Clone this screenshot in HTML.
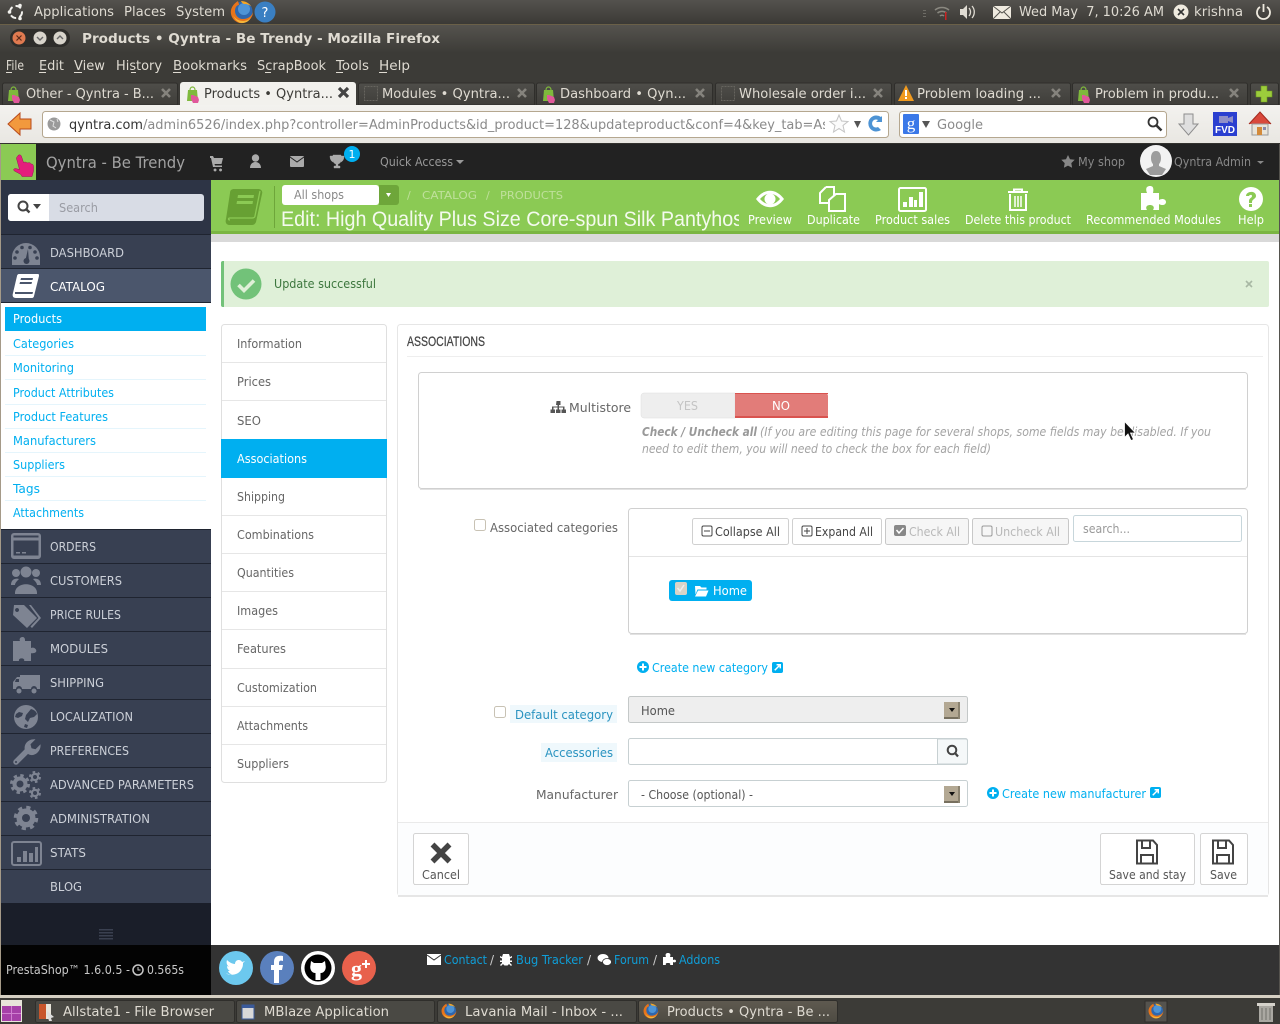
<!DOCTYPE html>
<html>
<head>
<meta charset="utf-8">
<title>Products • Qyntra - Be Trendy - Mozilla Firefox</title>
<style>
html,body{margin:0;padding:0;background:#fff;width:1280px;height:1024px;overflow:hidden}
svg{display:block}
text{white-space:pre}
.s{font-family:"DejaVu Sans",sans-serif;font-size:13px;fill:#dfdbd2}
.o{font-family:"DejaVu Sans",sans-serif;font-size:12px;fill:#666}
.side{fill:#ccd0d8}
.sub{fill:#00aff0}
.tb{fill:#fff}
.lnk{fill:#00aff0}
.ic{fill:#7e8492}
</style>
</head>
<body>
<svg width="1280" height="1024" viewBox="0 0 1280 1024" xmlns="http://www.w3.org/2000/svg">
<defs>
<linearGradient id="pan" x1="0" y1="0" x2="0" y2="1"><stop offset="0" stop-color="#54524e"/><stop offset="1" stop-color="#3b3a36"/></linearGradient>
<linearGradient id="ttl" x1="0" y1="0" x2="0" y2="1"><stop offset="0" stop-color="#55534e"/><stop offset="1" stop-color="#3c3b37"/></linearGradient>
<linearGradient id="tab" x1="0" y1="0" x2="0" y2="1"><stop offset="0" stop-color="#4f4e4a"/><stop offset="1" stop-color="#3f3e3a"/></linearGradient>
<linearGradient id="tbar" x1="0" y1="0" x2="0" y2="1"><stop offset="0" stop-color="#f3f2ef"/><stop offset="1" stop-color="#e9e7e2"/></linearGradient>
<linearGradient id="act" x1="0" y1="0" x2="0" y2="1"><stop offset="0" stop-color="#5f5a50"/><stop offset="1" stop-color="#4d4a42"/></linearGradient>
<symbol id="fav" viewBox="0 0 14 18" overflow="visible"><path d="M2 5h9l1 11H1z" fill="#7fb93c"/><path d="M4 5c0-4 5-4 5 0" fill="none" stroke="#7fb93c" stroke-width="1.200"/><path d="M5 10l2 0 5 2 1 3-1 3H7l-2-4z" fill="#e0589a"/></symbol>
<symbol id="x" viewBox="0 0 12 12"><path d="M2 2l8 8M10 2l-8 8" stroke="#85837d" stroke-width="2.600"/></symbol>
<symbol id="ff" viewBox="0 0 24 24"><circle cx="12.500" cy="11.500" r="10" fill="#2f67ad"/><circle cx="14" cy="9" r="6" fill="#4e94d6"/><path d="M8 1C3 4 0 9 1 14c1 6 7 10 12 9 6-1 10-6 10-11-1 4-5 7-10 7-5 0-8-4-8-8 0-4 2-6 4-6 0-2-1-3-1-4z" fill="#e8741a"/><path d="M11 1c4 0 8 2 10 5-2-1-4-2-6-2-2 0-3-1-4-3z" fill="#f5a623"/><path d="M3 15c2 4 6 6 10 6 3 0 6-1 8-4-2 5-6 6-9 6-4 0-7-3-9-8z" fill="#f4b63a"/></symbol>
<symbol id="floppy" viewBox="0 0 24 26"><path fill="none" stroke="#444" stroke-width="2" d="M2 1.500h16l4 4.500v18.500h-20z"/><path fill="none" stroke="#444" stroke-width="2" d="M7 2v7h8V2M6 24v-8h12v8"/></symbol>
<symbol id="plusc" viewBox="0 0 12 12"><circle cx="6" cy="6" r="6" fill="#00aff0"/><path d="M6 2.500v7M2.500 6h7" stroke="#fff" stroke-width="2"/></symbol>
<symbol id="ext" viewBox="0 0 12 12"><rect width="12" height="12" rx="2" fill="#00aff0"/><path d="M3 9l5-5M5 3h4v4" stroke="#fff" stroke-width="1.600" fill="none"/></symbol>
<symbol id="arrow" viewBox="0 0 16 17"><rect width="15" height="16" fill="#b3a893"/><rect y="15" width="15" height="2" fill="#77705f"/><rect x="14" width="2" height="17" fill="#8b8370"/><path d="M5 6h6l-3 4z" fill="#111"/></symbol>
</defs>

<!-- desktop panel -->
<rect width="1280" height="1024" fill="#fff"/>
<rect width="1280" height="24" fill="url(#pan)"/>
<rect y="24" width="1280" height="1" fill="#6a6048"/>
<g fill="none" stroke="#f2f1ed" stroke-width="2"><circle cx="16" cy="12" r="6" stroke-dasharray="6 3.200"/></g>
<g fill="#f2f1ed"><circle cx="9.500" cy="12" r="1.800"/><circle cx="20" cy="5.500" r="1.800"/><circle cx="20" cy="18.500" r="1.800"/></g>
<text class="s" x="34" y="16" font-size="14" textLength="80" lengthAdjust="spacingAndGlyphs">Applications</text>
<text class="s" x="124" y="16" textLength="42" lengthAdjust="spacingAndGlyphs">Places</text>
<text class="s" x="176" y="16" textLength="49" lengthAdjust="spacingAndGlyphs">System</text>
<use href="#ff" x="230" y="0" width="24" height="24"/>
<circle cx="265" cy="12" r="10.500" fill="#3a7fc2"/><text x="265" y="17" text-anchor="middle" font-family="DejaVu Sans,sans-serif" font-size="13" fill="#fff">?</text>
<g fill="none" stroke="#8a8880" stroke-width="1.500"><path d="M935 10a11 11 0 0 1 14 0M937.500 13a7 7 0 0 1 9 0M940 16a3 3 0 0 1 4 0"/></g>
<rect x="945" y="12" width="1.500" height="8" fill="#c22"/><g fill="#6e6c66"><rect x="923" y="10" width="3" height="1"/><rect x="923" y="13" width="3" height="1"/><rect x="923" y="16" width="3" height="1"/></g>
<path d="M960 9h3l4-4v14l-4-4h-3z" fill="#dfdbd2"/><path d="M969 8a6 6 0 0 1 0 8M972 6a9 9 0 0 1 0 12" fill="none" stroke="#dfdbd2" stroke-width="1.300"/>
<rect x="993" y="6" width="18" height="13" fill="#efeadf"/><path d="M993 6l9 7 9-7M993 19l7-7M1011 19l-7-7" fill="none" stroke="#55534e"/>
<text class="s" x="1019" y="16" textLength="145" lengthAdjust="spacingAndGlyphs">Wed May  7, 10:26 AM</text>
<circle cx="1181" cy="12" r="7.500" fill="#efeadf"/><path d="M1178 9l6 6M1184 9l-6 6" stroke="#333" stroke-width="1.600"/>
<text class="s" x="1194" y="16" textLength="49" lengthAdjust="spacingAndGlyphs">krishna</text>
<path d="M1260 7a6.500 6.500 0 1 0 7 0M1263.500 4v8" fill="none" stroke="#efeadf" stroke-width="1.800"/>

<!-- window title -->
<rect y="25" width="1280" height="28" fill="url(#ttl)"/>
<rect y="52" width="1280" height="54" fill="#3c3b37"/>
<rect x="10" y="29" width="60" height="18" rx="9" fill="#2e2d2a"/>
<circle cx="19" cy="38" r="6.500" fill="#e07a50"/><path d="M16.500 35.500l5 5M21.500 35.500l-5 5" stroke="#5a2a1a" stroke-width="1.200"/>
<circle cx="40" cy="38" r="6.500" fill="#d8d4cb"/><path d="M37 37l3 3 3-3" fill="none" stroke="#666" stroke-width="1.400"/>
<circle cx="60" cy="38" r="6.500" fill="#d8d4cb"/><path d="M57 39l3-3 3 3" fill="none" stroke="#666" stroke-width="1.400"/>
<text x="82" y="43" font-family="DejaVu Sans,sans-serif" font-weight="bold" font-size="13" fill="#dfdbd2" textLength="358" lengthAdjust="spacingAndGlyphs">Products • Qyntra - Be Trendy - Mozilla Firefox</text>

<!-- menu -->
<g class="m">
<text class="s" x="6" y="70" textLength="18" lengthAdjust="spacingAndGlyphs">File</text>
<text class="s" x="39" y="70" textLength="25" lengthAdjust="spacingAndGlyphs">Edit</text>
<text class="s" x="74" y="70" textLength="31" lengthAdjust="spacingAndGlyphs">View</text>
<text class="s" x="116" y="70" textLength="46" lengthAdjust="spacingAndGlyphs">History</text>
<text class="s" x="173" y="70" textLength="74" lengthAdjust="spacingAndGlyphs">Bookmarks</text>
<text class="s" x="257" y="70" textLength="69" lengthAdjust="spacingAndGlyphs">ScrapBook</text>
<text class="s" x="336" y="70" textLength="33" lengthAdjust="spacingAndGlyphs">Tools</text>
<text class="s" x="379" y="70" textLength="31" lengthAdjust="spacingAndGlyphs">Help</text>
</g>
<g fill="#dfdbd2"><rect x="6" y="72" width="6" height="1"/><rect x="39" y="72" width="7" height="1"/><rect x="74" y="72" width="8" height="1"/><rect x="131" y="72" width="5" height="1"/><rect x="173" y="72" width="8" height="1"/><rect x="265" y="72" width="6" height="1"/><rect x="336" y="72" width="7" height="1"/><rect x="379" y="72" width="8" height="1"/></g>

<!-- tabs -->
<g fill="url(#tab)" stroke="#2f2e2b">
<path d="M2.500 105V85a2 2 0 0 1 2-2h171a2 2 0 0 1 2 2v20z"/>
<path d="M358.500 105V85a2 2 0 0 1 2-2h172a2 2 0 0 1 2 2v20z"/>
<path d="M536.500 105V85a2 2 0 0 1 2-2h172a2 2 0 0 1 2 2v20z"/>
<path d="M715.500 105V85a2 2 0 0 1 2-2h172a2 2 0 0 1 2 2v20z"/>
<path d="M894.500 105V85a2 2 0 0 1 2-2h172a2 2 0 0 1 2 2v20z"/>
<path d="M1072.500 105V85a2 2 0 0 1 2-2h171a2 2 0 0 1 2 2v20z"/>
<path d="M1250.500 105V85a2 2 0 0 1 2-2h24a2 2 0 0 1 2 2v20z"/>
</g>
<path d="M180 106V85a3 3 0 0 1 3-3h170a3 3 0 0 1 3 3v21z" fill="#f2f1ed"/>
<use href="#fav" x="7" y="85" width="14" height="18"/>
<use href="#fav" x="186" y="85" width="14" height="18"/>
<use href="#fav" x="542" y="85" width="14" height="18"/>
<use href="#fav" x="1077" y="85" width="14" height="18"/>
<rect x="364.500" y="86.500" width="13" height="14" fill="none" stroke="#66645e" stroke-dasharray="2 1"/>
<rect x="721.500" y="86.500" width="13" height="14" fill="none" stroke="#66645e" stroke-dasharray="2 1"/>
<path d="M906 85l8 16h-16z" fill="#f09a1f"/><rect x="905" y="90" width="2" height="6" fill="#fff"/><rect x="905" y="97" width="2" height="2" fill="#fff"/>
<text class="s" x="26" y="98" textLength="128" lengthAdjust="spacingAndGlyphs">Other - Qyntra - B...</text>
<text class="s" x="204" y="98" style="fill:#3c3b37" textLength="129" lengthAdjust="spacingAndGlyphs">Products • Qyntra...</text>
<text class="s" x="382" y="98" textLength="128" lengthAdjust="spacingAndGlyphs">Modules • Qyntra...</text>
<text class="s" x="560" y="98" textLength="126" lengthAdjust="spacingAndGlyphs">Dashboard • Qyn...</text>
<text class="s" x="739" y="98" textLength="127" lengthAdjust="spacingAndGlyphs">Wholesale order i...</text>
<text class="s" x="917" y="98" textLength="124" lengthAdjust="spacingAndGlyphs">Problem loading ...</text>
<text class="s" x="1095" y="98" textLength="124" lengthAdjust="spacingAndGlyphs">Problem in produ...</text>
<use href="#x" x="160" y="87" width="12" height="12"/>
<path d="M339 88l9 9M348 88l-9 9" stroke="#444" stroke-width="3.200"/>
<use href="#x" x="516" y="87" width="12" height="12"/>
<use href="#x" x="694" y="87" width="12" height="12"/>
<use href="#x" x="872" y="87" width="12" height="12"/>
<use href="#x" x="1050" y="87" width="12" height="12"/>
<use href="#x" x="1228" y="87" width="12" height="12"/>
<path d="M1261 86h6v5h5v6h-5v5h-6v-5h-5v-6h5z" fill="#9ccc3c" stroke="#6c9a1c" stroke-width=".6"/>

<!-- nav toolbar -->
<rect y="105" width="1280" height="38" fill="url(#tbar)"/>
<rect y="143" width="1280" height="1" fill="#33322e"/>
<path d="M8 124l12-11v6h11v10H20v6z" fill="#f2993d" stroke="#b84a1c"/>
<rect x="42.500" y="111.500" width="846" height="26" rx="3" fill="#fff" stroke="#b5a78f"/>
<circle cx="54" cy="124" r="6.500" fill="#9a9a9a"/><path d="M50 120l4 2-1 4 3 2M57 119l1 3" stroke="#e0e0e0" fill="none"/>
<text x="69" y="129" font-family="DejaVu Sans,sans-serif" font-size="13" fill="#333" textLength="74" lengthAdjust="spacingAndGlyphs">qyntra.com</text>
<svg x="143" y="112" width="682" height="24"><text x="0" y="17" font-family="DejaVu Sans,sans-serif" font-size="13" fill="#8a8a8a" textLength="686" lengthAdjust="spacingAndGlyphs">/admin6526/index.php?controller=AdminProducts&amp;id_product=128&amp;updateproduct&amp;conf=4&amp;key_tab=As</text></svg>
<path d="M839 115l2.500 6 6.500.5-5 4 1.500 6.500-5.500-3.500-5.500 3.500 1.500-6.500-5-4 6.500-.5z" fill="#fbfbfb" stroke="#c4c4c4"/>
<path d="M854 121h7l-3.500 7z" fill="#555"/>
<path d="M881 117a8 8 0 1 0 0 13l-3-3a4 4 0 1 1 0-7l-2 2h6v-6z" fill="#4d93d4"/>
<rect x="899.500" y="111.500" width="267" height="26" rx="3" fill="#fff" stroke="#b5a78f"/>
<rect x="903" y="114" width="16" height="20" rx="1" fill="#3a78e8"/><text x="911" y="129" text-anchor="middle" font-family="Liberation Serif,serif" font-size="17" fill="#fff">g</text>
<path d="M922 121h8l-4 7z" fill="#555"/>
<text x="937" y="129" font-family="DejaVu Sans,sans-serif" font-size="13" fill="#8a8a8a" textLength="46" lengthAdjust="spacingAndGlyphs">Google</text>
<circle cx="1153" cy="122" r="4.500" fill="#fff" stroke="#333" stroke-width="1.800"/><path d="M1156.500 125.500l5 5" stroke="#333" stroke-width="2.500"/>
<path d="M1184 114h9v10h5l-9.500 11-9.500-11h5z" fill="#dfdfdf" stroke="#8d8d8d"/>
<rect x="1213" y="112" width="24" height="24" fill="#2a3fd0"/><rect x="1219" y="116" width="9" height="7" fill="#8f8fc8"/><path d="M1228 118l5-2v7l-5-2z" fill="#8f8fc8"/><text x="1225" y="133" text-anchor="middle" font-family="Liberation Sans,sans-serif" font-weight="bold" font-size="10" fill="#fff">FVD</text>
<path d="M1249 124l11-12 11 12" fill="#d9483b" stroke="#a22b20"/><path d="M1252 124h16v11h-16z" fill="#e8e4da" stroke="#999"/><rect x="1257" y="127" width="5" height="8" fill="#d38a3a"/><rect x="1263" y="127" width="3" height="3" fill="#88a"/>

<!-- presta header -->
<rect x="0" y="144" width="1280" height="36" fill="#222"/>
<rect x="1" y="144" width="35" height="36" fill="#8bca54"/>
<path d="M18 155.500c1-1 3-1 3.500 1l2 6c2-1 3 0 4 .5 2-1 3 0 3.500 1 2 0 2.500 1 2.500 3v4l-1.500 5.500H22l-1-2-6.500-3.500c-1.500-1-1-2.500 1-2.500l4 1-3-11c0-1 .5-2 1.500-2.500z" fill="#e41e7c" stroke="#9b0f55" stroke-width=".5"/>
<text x="46" y="168" font-family="DejaVu Sans,sans-serif" font-size="16" fill="#a2a2a2" textLength="139" lengthAdjust="spacingAndGlyphs">Qyntra - Be Trendy</text>
<path d="M210 156h3l1 2h9l-1.500 6h-7l.5 1.500h7v1.500h-9l-2-9h-1zM215 168.500a1.500 1.500 0 1 0 .1 0zM220.500 168.500a1.500 1.500 0 1 0 .1 0z" fill="#aaa"/>
<g fill="#aaa"><circle cx="255.500" cy="158" r="3.700"/><path d="M250 168c0-8 11-8 11 0z"/></g>
<rect x="290" y="156" width="14" height="11" rx="1" fill="#aaa"/><path d="M290 157l7 5 7-5" fill="none" stroke="#222"/>
<path d="M333 155h8v5a4 4 0 0 1-3 4v2h2v2h-6v-2h2v-2a4 4 0 0 1-3-4zM333 156h-3c0 3 1 5 3 6M341 156h3c0 3-1 5-3 6" fill="#aaa" stroke="#aaa" stroke-width=".4"/>
<circle cx="352" cy="154" r="8" fill="#00aff0"/><text x="352" y="158" text-anchor="middle" font-family="DejaVu Sans,sans-serif" font-size="11" fill="#fff">1</text>
<text class="o" x="380" y="166" style="fill:#999" textLength="73" lengthAdjust="spacingAndGlyphs">Quick Access</text><path d="M456 160h8l-4 4z" fill="#999"/>
<path d="M1068 155l2 4.200 4.700.6-3.400 3.300.8 4.700-4.100-2.200-4.100 2.200.8-4.700-3.400-3.300 4.700-.6z" fill="#888"/>
<text class="o" x="1078" y="166" style="fill:#888" textLength="47" lengthAdjust="spacingAndGlyphs">My shop</text>
<circle cx="1156" cy="161" r="16" fill="#f2f2f2"/>
<path d="M1156 151c-4 0-5 4-5 7 0 3 1 5 2 6v2l-7 3 4 6h12l4-6-7-3v-2c1-1 2-3 2-6 0-3-1-7-5-7z" fill="#9c9c9c"/>
<text class="o" x="1174" y="166" style="fill:#888" textLength="77" lengthAdjust="spacingAndGlyphs">Qyntra Admin</text><path d="M1257 161h7l-3.500 3z" fill="#888"/>

<!-- sidebar -->
<rect x="0" y="144" width="1" height="855" fill="#a59a88"/>
<rect x="1" y="180" width="210" height="723" fill="#384052"/>
<rect x="1" y="180" width="210" height="55" fill="#2d3445"/>
<rect x="1" y="234" width="210" height="1" fill="#1f2430"/>
<rect x="8" y="194" width="196" height="27" rx="3" fill="#d8dce5"/>
<path d="M11 194h38v27H11a3 3 0 0 1-3-3v-21a3 3 0 0 1 3-3z" fill="#fff"/>
<circle cx="23" cy="206" r="4.500" fill="none" stroke="#444" stroke-width="2"/><path d="M26 209l3.500 3.500" stroke="#444" stroke-width="2.400"/>
<path d="M33 204h8l-4 5z" fill="#444"/>
<text class="o" x="59" y="212" style="fill:#9a9ca4" textLength="39" lengthAdjust="spacingAndGlyphs">Search</text>

<rect x="1" y="235" width="210" height="34" fill="#384052"/>
<rect x="1" y="269" width="210" height="34" fill="#4b566c"/>
<g fill="#1f2430"><rect x="1" y="268" width="210" height="1"/><rect x="1" y="302" width="210" height="1"/><rect x="1" y="529" width="210" height="1"/><rect x="1" y="563" width="210" height="1"/><rect x="1" y="597" width="210" height="1"/><rect x="1" y="631" width="210" height="1"/><rect x="1" y="665" width="210" height="1"/><rect x="1" y="699" width="210" height="1"/><rect x="1" y="733" width="210" height="1"/><rect x="1" y="767" width="210" height="1"/><rect x="1" y="801" width="210" height="1"/><rect x="1" y="835" width="210" height="1"/><rect x="1" y="869" width="210" height="1"/></g>
<rect x="1" y="303" width="210" height="226" fill="#fff"/>
<rect x="5" y="307" width="201" height="24" fill="#00aff0"/>
<g fill="#e5f5fc"><rect x="5" y="355" width="201" height="1"/><rect x="5" y="379" width="201" height="1"/><rect x="5" y="404" width="201" height="1"/><rect x="5" y="428" width="201" height="1"/><rect x="5" y="452" width="201" height="1"/><rect x="5" y="476" width="201" height="1"/><rect x="5" y="500" width="201" height="1"/></g>
<rect x="1" y="903" width="210" height="42" fill="#1a1e29"/>
<g fill="#3a4050"><rect x="99" y="929" width="14" height="1.500"/><rect x="99" y="932" width="14" height="1.500"/><rect x="99" y="935" width="14" height="1.500"/><rect x="99" y="938" width="14" height="1.500"/></g>

<g class="o" font-size="12">
<text class="o side" x="50" y="257" textLength="74" lengthAdjust="spacingAndGlyphs">DASHBOARD</text>
<text class="o" x="50" y="291" style="fill:#fff" textLength="55" lengthAdjust="spacingAndGlyphs">CATALOG</text>
<text class="o side" x="50" y="551" textLength="46" lengthAdjust="spacingAndGlyphs">ORDERS</text>
<text class="o side" x="50" y="585" textLength="72" lengthAdjust="spacingAndGlyphs">CUSTOMERS</text>
<text class="o side" x="50" y="619" textLength="71" lengthAdjust="spacingAndGlyphs">PRICE RULES</text>
<text class="o side" x="50" y="653" textLength="58" lengthAdjust="spacingAndGlyphs">MODULES</text>
<text class="o side" x="50" y="687" textLength="54" lengthAdjust="spacingAndGlyphs">SHIPPING</text>
<text class="o side" x="50" y="721" textLength="83" lengthAdjust="spacingAndGlyphs">LOCALIZATION</text>
<text class="o side" x="50" y="755" textLength="79" lengthAdjust="spacingAndGlyphs">PREFERENCES</text>
<text class="o side" x="50" y="789" textLength="144" lengthAdjust="spacingAndGlyphs">ADVANCED PARAMETERS</text>
<text class="o side" x="50" y="823" textLength="100" lengthAdjust="spacingAndGlyphs">ADMINISTRATION</text>
<text class="o side" x="50" y="857" textLength="36" lengthAdjust="spacingAndGlyphs">STATS</text>
<text class="o side" x="50" y="891" textLength="32" lengthAdjust="spacingAndGlyphs">BLOG</text>
<text class="o" x="13" y="323" style="fill:#fff" textLength="49" lengthAdjust="spacingAndGlyphs">Products</text>
<text class="o sub" x="13" y="348" textLength="61" lengthAdjust="spacingAndGlyphs">Categories</text>
<text class="o sub" x="13" y="372" textLength="61" lengthAdjust="spacingAndGlyphs">Monitoring</text>
<text class="o sub" x="13" y="397" textLength="101" lengthAdjust="spacingAndGlyphs">Product Attributes</text>
<text class="o sub" x="13" y="421" textLength="95" lengthAdjust="spacingAndGlyphs">Product Features</text>
<text class="o sub" x="13" y="445" textLength="83" lengthAdjust="spacingAndGlyphs">Manufacturers</text>
<text class="o sub" x="13" y="469" textLength="52" lengthAdjust="spacingAndGlyphs">Suppliers</text>
<text class="o sub" x="13" y="493" textLength="27" lengthAdjust="spacingAndGlyphs">Tags</text>
<text class="o sub" x="13" y="517" textLength="71" lengthAdjust="spacingAndGlyphs">Attachments</text>
</g>

<!-- sidebar icons -->
<g class="ic">
<path d="M12 265v-8a14 14 0 0 1 28 0v8z"/>
<path d="M11 536a3 3 0 0 1 3-3h24a3 3 0 0 1 3 3v20a3 3 0 0 1-3 3H14a3 3 0 0 1-3-3zm2.500 4.500v15h25v-15zm0-5v2h25v-2zM16 552h4v1.500h-4zm6 0h4v1.500h-4z" fill-rule="evenodd"/>
<circle cx="26" cy="572" r="5.500"/><circle cx="16" cy="573" r="4"/><circle cx="36" cy="573" r="4"/><path d="M15 594c-1-13 23-13 22 0z"/><path d="M11 585c0-6 5-7 8-6-2 2-4 4-4 6zM41 585c0-6-5-7-8-6 2 2 4 4 4 6z"/>
<path d="M14 605h10l13 13-10 10-14-13zM17 608a2 2 0 1 0 .1 0z" fill-rule="evenodd"/><path d="M29 605l2 0 10 13-9 10-1.500-1.500 8-8.500z"/>
<path d="M13 641h7c-2-4 5-6 5-1 0 2 0 1 0 1h6v7c4-2 8 4 3 5s-3-1-3 0v8h-7c2-3-6-4-5 0h-6z"/>
<path d="M20 675h20v14h-3a3 3 0 0 0-6 0H22a3 3 0 0 0-6 0h-3v-7l4-5h3zm-4 4l-1 3h4v-3z" fill-rule="evenodd"/><circle cx="19" cy="691" r="2.500"/><circle cx="34" cy="691" r="2.500"/>
<circle cx="26" cy="717" r="12"/>
</g>
<path d="M31 709c3 1 5 2 6 5l-3 3-4 1-2 4-3-3 1-4zM19 712l4 1-1 3-4 2-3-1 1-3zM25 724l3 1-1 3-3-1z" fill="#384052"/>
<!-- wrench -->
<path d="M16 762l12-12" stroke="#7e8492" stroke-width="5.500" stroke-linecap="round"/>
<path d="M25.500 751.500c-3-6 2-13 10-12.200l-5 5 1 4 4 1 5-5c.8 7-6 13-12 10z" fill="#7e8492"/>
<circle cx="16" cy="762" r="1" fill="#384052"/>
<!-- gauge details -->
<g fill="#384052"><circle cx="17" cy="252" r="1.800"/><circle cx="22" cy="247.500" r="1.800"/><circle cx="30" cy="247.500" r="1.800"/><circle cx="35" cy="252" r="1.800"/><circle cx="15" cy="258" r="1.800"/><circle cx="37" cy="258" r="1.800"/></g>
<path d="M25 262l3-13 1 13z" fill="#384052"/><circle cx="26.500" cy="261" r="3" fill="#384052"/>
<path d="M19 274h19c1 0 1 1 1 2l-5 20c0 1-1 2-2 2H16c-3 0-4-2-3-5l4-17c0-1 1-2 2-2z" fill="#fff"/>
<path d="M21 278h12l-.5 2H20.500zM20 282h12l-.5 2H19.500zM15 292h18l-.5 2H15z" fill="#4b566c"/>
<!-- gears -->
<g fill="none" stroke="#7e8492">
<circle cx="20" cy="784" r="8.500" stroke-width="3" stroke-dasharray="3.340 3.340"/>
<circle cx="35" cy="777" r="5" stroke-width="2" stroke-dasharray="2.620 2.620"/>
<circle cx="35" cy="793" r="5" stroke-width="2" stroke-dasharray="2.620 2.620"/>
<circle cx="26" cy="818" r="10.500" stroke-width="3.500" stroke-dasharray="4.120 4.120"/>
</g>
<g fill="#7e8492"><circle cx="20" cy="784" r="7.500"/><circle cx="35" cy="777" r="4.200"/><circle cx="35" cy="793" r="4.200"/><circle cx="26" cy="818" r="9.500"/></g>
<g fill="#384052"><circle cx="20" cy="784" r="3.500"/><circle cx="35" cy="777" r="2"/><circle cx="35" cy="793" r="2"/><circle cx="26" cy="818" r="4"/></g>
<rect x="12" y="842" width="29" height="23" rx="2" fill="none" stroke="#7e8492" stroke-width="2"/>
<g class="ic"><rect x="17" y="857" width="4" height="5"/><rect x="23" y="851" width="4" height="11"/><rect x="29" y="853" width="4" height="9"/><rect x="35" y="847" width="3" height="15"/></g>

<!-- green header -->
<rect x="211" y="180" width="1069" height="51" fill="#8bca54"/>
<rect x="211" y="231" width="1069" height="3" fill="#7ab542"/>
<rect x="211" y="234" width="1069" height="8" fill="#d9d9d9"/>
<path d="M234 189h24c3 0 5 2 4 5l-6 28c-1 2-2 3-4 3h-22c-4 0-5-3-4-6l4-26c0-3 2-4 4-4z" fill="#67a033"/>
<path d="M230 220c-2 0-2-2 0-2h22c2 0 3-1 3-2l5-25" fill="none" stroke="#8bca54" stroke-width="1.300"/>
<path d="M238 195h16l-.5 3h-16zM237 201h16l-.5 3h-16z" fill="#8bca54"/>
<rect x="274" y="186" width="1" height="42" fill="#6ea63a"/>
<rect x="282" y="185" width="97" height="20" rx="3" fill="#fff"/>
<path d="M379 185h17a3 3 0 0 1 3 3v14a3 3 0 0 1-3 3h-17z" fill="#6ea63a"/><path d="M386 193h5l-2.500 4z" fill="#fff"/>
<text class="o" x="294" y="199" style="fill:#888" textLength="50" lengthAdjust="spacingAndGlyphs">All shops</text>
<g fill="#bfe09b" font-family="DejaVu Sans,sans-serif" font-size="11">
<text x="407" y="199">/</text>
<text x="422" y="199" textLength="55" lengthAdjust="spacingAndGlyphs">CATALOG</text>
<text x="486" y="199">/</text>
<text x="500" y="199" textLength="63" lengthAdjust="spacingAndGlyphs">PRODUCTS</text>
</g>
<svg x="281" y="205" width="458" height="30"><text x="0" y="21" font-family="Liberation Sans,sans-serif" font-size="21" fill="#f4faee" textLength="462" lengthAdjust="spacingAndGlyphs">Edit: High Quality Plus Size Core-spun Silk Pantyhos</text></svg>
<g>
<text class="o tb" x="748" y="224" textLength="44" lengthAdjust="spacingAndGlyphs">Preview</text>
<text class="o tb" x="807" y="224" textLength="53" lengthAdjust="spacingAndGlyphs">Duplicate</text>
<text class="o tb" x="875" y="224" textLength="75" lengthAdjust="spacingAndGlyphs">Product sales</text>
<text class="o tb" x="965" y="224" textLength="106" lengthAdjust="spacingAndGlyphs">Delete this product</text>
<text class="o tb" x="1086" y="224" textLength="135" lengthAdjust="spacingAndGlyphs">Recommended Modules</text>
<text class="o tb" x="1238" y="224" textLength="26" lengthAdjust="spacingAndGlyphs">Help</text>
</g>
<!-- toolbar icons -->
<path d="M756 199c8-11 20-11 28 0-8 11-20 11-28 0z" fill="#fff"/><path d="M760 199c6-7 14-7 20 0-6 7-14 7-20 0z" fill="#8bca54"/><circle cx="770" cy="199" r="5.500" fill="#fff"/>
<g fill="none" stroke="#fff" stroke-width="2"><path d="M826 187h8v9M826 187l-6 6v10h9"/><path d="M836 194h9v17h-16v-11z"/></g>
<rect x="899" y="188" width="27" height="23" rx="1.500" fill="none" stroke="#fff" stroke-width="2"/>
<g fill="#fff"><rect x="903" y="202" width="4" height="5"/><rect x="909" y="197" width="4" height="10"/><rect x="914" y="200" width="3" height="7"/><rect x="919" y="192" width="4" height="15"/></g>
<g fill="none" stroke="#fff" stroke-width="2"><path d="M1008 192h20M1014 192v-2.500h8v2.500"/><path d="M1010 194v16h16v-16"/><path d="M1015 196v11M1018 196v11M1021 196v11" stroke-width="1.500"/></g>
<path d="M1141 193h6c-2-5 0-7 3-7s4 2 3 7h6v7c3-2 7-1 7 2s-4 4-7 2v6h-6c2-3 0-5-3-5s-5 2-3 5h-6z" fill="#fff"/>
<circle cx="1251" cy="199" r="12" fill="#fff"/><path d="M1246 196c0-5 10-6 10 0 0 3-4 3-4 6v1h-3v-2c0-3 3-3 3-5 0-2-3-1-3 0z" fill="#8bca54"/><rect x="1249" y="204" width="3" height="3" fill="#8bca54"/>

<!-- alert -->
<rect x="221" y="261" width="1048" height="46" rx="2" fill="#dff0d8"/>
<path d="M224 261v46h-1a2 2 0 0 1-2-2v-42a2 2 0 0 1 2-2z" fill="#72c279"/>
<circle cx="246" cy="284" r="15.500" fill="#72c279"/>
<path d="M238.500 285l5.500 5.500 10-10" fill="none" stroke="#dff0d8" stroke-width="3.600"/>
<text class="o" x="274" y="288" style="fill:#3c763d" textLength="102" lengthAdjust="spacingAndGlyphs">Update successful</text>
<path d="M1246 281l6 6M1252 281l-6 6" stroke="#a8b8a4" stroke-width="1.600"/>

<!-- left tabs -->
<rect x="221.500" y="324.500" width="165" height="458" rx="3" fill="#fff" stroke="#dfdfdf"/>
<g fill="#e6e6e6"><rect x="222" y="362" width="164" height="1"/><rect x="222" y="400" width="164" height="1"/><rect x="222" y="515" width="164" height="1"/><rect x="222" y="553" width="164" height="1"/><rect x="222" y="591" width="164" height="1"/><rect x="222" y="629" width="164" height="1"/><rect x="222" y="668" width="164" height="1"/><rect x="222" y="706" width="164" height="1"/><rect x="222" y="744" width="164" height="1"/></g>
<rect x="221" y="439" width="166" height="39" fill="#00aff0"/>
<text class="o" x="237" y="348" textLength="65" lengthAdjust="spacingAndGlyphs">Information</text>
<text class="o" x="237" y="386" textLength="34" lengthAdjust="spacingAndGlyphs">Prices</text>
<text class="o" x="237" y="425" textLength="24" lengthAdjust="spacingAndGlyphs">SEO</text>
<text class="o" x="237" y="463" style="fill:#fff" textLength="70" lengthAdjust="spacingAndGlyphs">Associations</text>
<text class="o" x="237" y="501" textLength="48" lengthAdjust="spacingAndGlyphs">Shipping</text>
<text class="o" x="237" y="539" textLength="77" lengthAdjust="spacingAndGlyphs">Combinations</text>
<text class="o" x="237" y="577" textLength="57" lengthAdjust="spacingAndGlyphs">Quantities</text>
<text class="o" x="237" y="615" textLength="41" lengthAdjust="spacingAndGlyphs">Images</text>
<text class="o" x="237" y="653" textLength="49" lengthAdjust="spacingAndGlyphs">Features</text>
<text class="o" x="237" y="692" textLength="80" lengthAdjust="spacingAndGlyphs">Customization</text>
<text class="o" x="237" y="730" textLength="71" lengthAdjust="spacingAndGlyphs">Attachments</text>
<text class="o" x="237" y="768" textLength="52" lengthAdjust="spacingAndGlyphs">Suppliers</text>

<!-- main panel -->
<rect x="397.500" y="324.500" width="871" height="571" rx="3" fill="#fff" stroke="#e6e6e6"/>
<rect x="398" y="895" width="870" height="2" fill="#e6e6e6"/>
<text x="407" y="346" font-family="Liberation Sans,sans-serif" font-size="14" fill="#444" stroke="#444" stroke-width=".25" textLength="78" lengthAdjust="spacingAndGlyphs">ASSOCIATIONS</text>
<rect x="407" y="356" width="856" height="1" fill="#eeeeee"/>

<!-- multistore box -->
<rect x="418.500" y="372.500" width="829" height="116" rx="3" fill="#fff" stroke="#d0d0d0"/>
<rect x="420" y="489" width="826" height="1" fill="#e2e2e2"/>
<path d="M556.500 401h4v4h-1.500v1.500h5.500v3h1.500v3.500h-4.500v-3.500h1.500v-2h-4v2h1.500v3.500h-4.500v-3.500h1.500v-2h-4v2h1.500v3.500h-4.500v-3.500h1.500v-3h5.500v-1.500h-1.500z" fill="#555"/>
<text class="o" x="569" y="412" textLength="62" lengthAdjust="spacingAndGlyphs">Multistore</text>
<path d="M644 393h91v25h-91a3 3 0 0 1-3-3v-19a3 3 0 0 1 3-3z" fill="#eeeeee" stroke="#dedede" stroke-width=".5"/>
<path d="M735 393h90a3 3 0 0 1 3 3v19a3 3 0 0 1-3 3h-90z" fill="#e27c79"/>
<rect x="735" y="393" width="93" height="1" fill="#d9534f"/><rect x="735" y="416" width="93" height="2" fill="#d9534f"/>
<text class="o" x="677" y="410" style="fill:#c4c4c4" textLength="21" lengthAdjust="spacingAndGlyphs">YES</text>
<text class="o" x="772" y="410" style="fill:#fff" textLength="18" lengthAdjust="spacingAndGlyphs">NO</text>
<text x="642" y="436" font-family="DejaVu Sans,sans-serif" font-size="12" font-style="italic" font-weight="bold" fill="#999" textLength="115" lengthAdjust="spacingAndGlyphs">Check / Uncheck all</text>
<text x="760" y="436" font-family="DejaVu Sans,sans-serif" font-size="12" font-style="italic" fill="#a3a3a3" textLength="451" lengthAdjust="spacingAndGlyphs">(If you are editing this page for several shops, some fields may be disabled. If you</text>
<text x="642" y="453" font-family="DejaVu Sans,sans-serif" font-size="12" font-style="italic" fill="#a3a3a3" textLength="349" lengthAdjust="spacingAndGlyphs">need to edit them, you will need to check the box for each field)</text>

<!-- categories -->
<rect x="474.500" y="519.500" width="11" height="11" rx="2" fill="#fff" stroke="#c8c2b4"/>
<text class="o" x="490" y="532" textLength="128" lengthAdjust="spacingAndGlyphs">Associated categories</text>
<rect x="628.500" y="508.500" width="619" height="125" rx="3" fill="#fff" stroke="#d0d0d0"/>
<rect x="630" y="634" width="616" height="1" fill="#e2e2e2"/>
<rect x="629" y="556" width="618" height="1" fill="#e4e4e4"/>
<g fill="#fff" stroke="#d0d0d0"><rect x="692.500" y="518.500" width="96" height="26" rx="2"/><rect x="792.500" y="518.500" width="89" height="26" rx="2"/></g>
<g fill="#f6f6f6" stroke="#c8c8c8"><rect x="885.500" y="518.500" width="83" height="26" rx="2"/><rect x="972.500" y="518.500" width="96" height="26" rx="2"/></g>
<rect x="702" y="526" width="10" height="10" rx="1.500" fill="none" stroke="#444"/><path d="M704 531h6" stroke="#444"/>
<rect x="802" y="526" width="10" height="10" rx="1.500" fill="none" stroke="#444"/><path d="M804 531h6M807 528v6" stroke="#444"/>
<rect x="894" y="525" width="12" height="11" rx="2" fill="#888"/><path d="M896.500 530l2.500 3 4.500-5" fill="none" stroke="#fff" stroke-width="1.500"/>
<rect x="982" y="526" width="10" height="10" rx="1.500" fill="none" stroke="#999"/>
<text class="o" x="715" y="536" style="fill:#444" textLength="65" lengthAdjust="spacingAndGlyphs">Collapse All</text>
<text class="o" x="815" y="536" style="fill:#444" textLength="58" lengthAdjust="spacingAndGlyphs">Expand All</text>
<text class="o" x="909" y="536" style="fill:#b8b8b8" textLength="51" lengthAdjust="spacingAndGlyphs">Check All</text>
<text class="o" x="995" y="536" style="fill:#b8b8b8" textLength="65" lengthAdjust="spacingAndGlyphs">Uncheck All</text>
<rect x="1073.500" y="515.500" width="168" height="26" rx="2" fill="#fff" stroke="#c7d6db"/>
<text class="o" x="1083" y="533" style="fill:#999" textLength="47" lengthAdjust="spacingAndGlyphs">search...</text>
<rect x="669" y="580" width="83" height="21" rx="3" fill="#00aff0"/>
<rect x="675" y="582" width="12" height="13" rx="2" fill="#d9d4c8"/><path d="M677.500 588l2.500 3 4-6" fill="none" stroke="#eee" stroke-width="1.500"/>
<path d="M695 586h5l1.500 1.500h5v2h-9l-2 5zM698 590.500h10.500l-2.500 6h-11z" fill="#fff"/>
<text class="o" x="713" y="595" style="fill:#fff" textLength="34" lengthAdjust="spacingAndGlyphs">Home</text>

<use href="#plusc" x="637" y="661" width="12" height="12"/>
<text class="o lnk" x="652" y="672" textLength="116" lengthAdjust="spacingAndGlyphs">Create new category</text>
<use href="#ext" x="772" y="662" width="11" height="11"/>

<!-- default category -->
<rect x="494.500" y="706.500" width="11" height="11" rx="2" fill="#fff" stroke="#c8c2b4"/>
<rect x="510" y="705" width="107" height="18" fill="#eff8fc"/>
<text class="o" x="515" y="719" style="fill:#2a93c0" textLength="98" lengthAdjust="spacingAndGlyphs">Default category</text>
<rect x="628.500" y="696.500" width="339" height="26" rx="2" fill="#eeeeee" stroke="#c4c8c8"/>
<text class="o" x="641" y="715" style="fill:#555" textLength="34" lengthAdjust="spacingAndGlyphs">Home</text>
<use href="#arrow" x="944" y="702" width="16" height="17"/>
<rect x="541" y="743" width="76" height="19" fill="#eff8fc"/>
<text class="o" x="545" y="757" style="fill:#2a93c0" textLength="68" lengthAdjust="spacingAndGlyphs">Accessories</text>
<rect x="628.500" y="738.500" width="339" height="26" rx="2" fill="#fff" stroke="#c7d0d2"/>
<path d="M937.500 739v25h28a2 2 0 0 0 2-2v-21a2 2 0 0 0-2-2z" fill="#f5f8f9" stroke="#c7d0d2"/>
<circle cx="952" cy="750" r="4.300" fill="none" stroke="#444" stroke-width="2"/><path d="M955 753l3 3.500" stroke="#444" stroke-width="2.200"/>
<text class="o" x="536" y="799" textLength="82" lengthAdjust="spacingAndGlyphs">Manufacturer</text>
<rect x="628.500" y="780.500" width="339" height="26" rx="2" fill="#fff" stroke="#c7d0d2"/>
<text class="o" x="641" y="799" style="fill:#555" textLength="112" lengthAdjust="spacingAndGlyphs">- Choose (optional) -</text>
<use href="#arrow" x="944" y="786" width="16" height="17"/>
<use href="#plusc" x="987" y="787" width="12" height="12"/>
<text class="o lnk" x="1002" y="798" textLength="144" lengthAdjust="spacingAndGlyphs">Create new manufacturer</text>
<use href="#ext" x="1150" y="787" width="11" height="11"/>

<!-- panel footer -->
<rect x="398" y="822" width="870" height="73" fill="#fcfdfe"/>
<rect x="398" y="822" width="870" height="1" fill="#eaeaea"/>
<g fill="#fff" stroke="#d4d4d4"><rect x="413.500" y="833.500" width="55" height="51" rx="2"/><rect x="1100.500" y="833.500" width="94" height="51" rx="2"/><rect x="1200.500" y="833.500" width="47" height="51" rx="2"/></g>
<g fill="#d4d4d4"><rect x="414" y="884" width="54" height="1"/><rect x="1101" y="884" width="93" height="1"/><rect x="1201" y="884" width="46" height="1"/></g>
<path d="M432.500 844.500l8.500 8.500 8.500-8.500M432.500 861.500l8.500-8.500 8.500 8.500" fill="none" stroke="#444" stroke-width="5.500"/>
<text class="o" x="422" y="879" style="fill:#555" textLength="38" lengthAdjust="spacingAndGlyphs">Cancel</text>
<use href="#floppy" x="1135" y="839" width="24" height="26"/>
<use href="#floppy" x="1211" y="839" width="24" height="26"/>
<text class="o" x="1109" y="879" style="fill:#555" textLength="77" lengthAdjust="spacingAndGlyphs">Save and stay</text>
<text class="o" x="1210" y="879" style="fill:#555" textLength="27" lengthAdjust="spacingAndGlyphs">Save</text>

<!-- cursor -->
<path d="M1124.500 421.500v16l3.500-3.500 3 6.500 2.500-1-3-6.500h5z" fill="#111" stroke="#fff" stroke-width=".8"/>

<!-- page footer -->
<rect x="211" y="945" width="1069" height="50" fill="#333"/>
<rect x="1" y="945" width="210" height="50" fill="#030303"/>
<text x="6" y="974" font-family="DejaVu Sans,sans-serif" font-size="12" fill="#c8c8c8" textLength="124" lengthAdjust="spacingAndGlyphs">PrestaShop™ 1.6.0.5 -</text>
<circle cx="138" cy="970" r="5" fill="none" stroke="#c8c8c8" stroke-width="1.500"/><path d="M138 967v3h2.500" fill="none" stroke="#c8c8c8"/>
<text x="147" y="974" font-family="DejaVu Sans,sans-serif" font-size="12" fill="#c8c8c8" textLength="37" lengthAdjust="spacingAndGlyphs">0.565s</text>
<circle cx="236" cy="968" r="17" fill="#6cc8ee"/><path d="M226 973c5 3 12 2 15-3 2-3 2-5 2-7l2-2-3 1c-1-3-7-3-7 2-3 0-6-2-8-4-1 3 0 5 2 7l-2-1c0 2 1 4 3 5h-2c1 2 2 3 4 3-2 1-4 1-6-1z" fill="#fff"/>
<circle cx="277" cy="968" r="17" fill="#5a80bd"/><path d="M274 983v-13h-3v-5h3v-3c0-5 3-7 9-6v5c-3-1-4 0-4 2v2h4l-1 5h-3v13z" fill="#fff"/>
<circle cx="318" cy="968" r="17" fill="#fff"/><circle cx="318" cy="968" r="13.500" fill="#000"/><path d="M311 961l3 2h8l3-2 .5 4c1 4-1 8-5 8v7h-5v-7c-4 0-6-4-5-8z" fill="#fff"/>
<circle cx="359" cy="968" r="17" fill="#e8614c"/><text x="351" y="976" font-family="Liberation Serif,serif" font-weight="bold" font-size="22" fill="#fff">g</text><path d="M365 960h2v3h3v2h-3v3h-2v-3h-3v-2h3z" fill="#fff"/>
<rect x="427" y="954" width="14" height="11" fill="#fff"/><path d="M427 955l7 5 7-5" fill="none" stroke="#333"/>
<text class="o lnk" x="444" y="964" style="fill:#0f9ed8" textLength="43" lengthAdjust="spacingAndGlyphs">Contact</text>
<text class="o" x="490" y="964" style="fill:#ccc">/</text>
<path d="M503 954h6l1 3 2-1v1.500l-2 1v2h2v1.500h-2v1l2 2-1 1-2-2-1.500 1.500h-3l-1.500-1.500-2 2-1-1 2-2v-1h-2v-1.500h2v-2l-2-1V956l2 1z" fill="#fff"/>
<text class="o lnk" x="516" y="964" style="fill:#0f9ed8" textLength="67" lengthAdjust="spacingAndGlyphs">Bug Tracker</text>
<text class="o" x="587" y="964" style="fill:#ccc">/</text>
<ellipse cx="603" cy="958" rx="5.500" ry="4" fill="#fff"/><ellipse cx="607" cy="962" rx="4.500" ry="3.500" fill="#fff" stroke="#333" stroke-width=".8"/>
<text class="o lnk" x="614" y="964" style="fill:#0f9ed8" textLength="35" lengthAdjust="spacingAndGlyphs">Forum</text>
<text class="o" x="653" y="964" style="fill:#ccc">/</text>
<path d="M663 957h3c-1-3 0-4 2-4s3 1 2 4h3v3c2-1 3 0 3 1s-1 2-3 1v3h-3c1-2-1-2-2-2s-3 0-2 2h-3z" fill="#fff"/>
<text class="o lnk" x="679" y="964" style="fill:#0f9ed8" textLength="41" lengthAdjust="spacingAndGlyphs">Addons</text>

<!-- bottom of window / taskbar -->
<rect x="0" y="995" width="1280" height="3" fill="#d6d0c3"/>
<rect x="1279" y="144" width="1" height="851" fill="#55534e"/>
<rect y="998" width="1280" height="26" fill="#3c3b37"/>
<rect x="1" y="1000" width="21" height="22" fill="#e8e4da"/><rect x="2" y="1006" width="19" height="15" fill="#a640a8"/><rect x="11" y="1006" width="1" height="15" fill="#d080d0"/><rect x="2" y="1013" width="19" height="1" fill="#d080d0"/>
<g fill="#4a4944" stroke="#2f2e2b"><rect x="35.500" y="1000.500" width="199" height="22" rx="2"/><rect x="236.500" y="1000.500" width="198" height="22" rx="2"/><rect x="437.500" y="1000.500" width="199" height="22" rx="2"/></g>
<rect x="638.500" y="1000.500" width="199" height="22" rx="2" fill="url(#act)" stroke="#2f2e2b"/>
<rect x="39" y="1004" width="12" height="15" fill="#e8e4da"/><rect x="39" y="1004" width="7" height="15" fill="#c8552b"/><path d="M47 1011l7 6-3 1 1 3h-3l-2-7z" fill="#ddd"/>
<rect x="242" y="1005" width="12" height="14" fill="#d8d8d8" stroke="#3a5a9a"/><rect x="242" y="1005" width="12" height="3" fill="#3a5a9a"/>
<use href="#ff" x="441" y="1003" width="16" height="16"/>
<use href="#ff" x="643" y="1003" width="16" height="16"/>
<text class="s" x="63" y="1016" textLength="151" lengthAdjust="spacingAndGlyphs">Allstate1 - File Browser</text>
<text class="s" x="264" y="1016" textLength="125" lengthAdjust="spacingAndGlyphs">MBlaze Application</text>
<text class="s" x="465" y="1016" textLength="158" lengthAdjust="spacingAndGlyphs">Lavania Mail - Inbox - ...</text>
<text class="s" x="667" y="1016" textLength="163" lengthAdjust="spacingAndGlyphs">Products • Qyntra - Be ...</text>
<rect x="1145" y="1001" width="22" height="21" fill="#55534e" stroke="#2f2e2b"/>
<use href="#ff" x="1148" y="1003" width="16" height="16"/>
<rect x="1259" y="1006" width="14" height="16" fill="#aaa8a2"/><rect x="1257" y="1003" width="18" height="3" fill="#d5d2cb"/><path d="M1262 1008v12M1266 1008v12M1270 1008v12" stroke="#70706a"/>
</svg>
</body>
</html>
